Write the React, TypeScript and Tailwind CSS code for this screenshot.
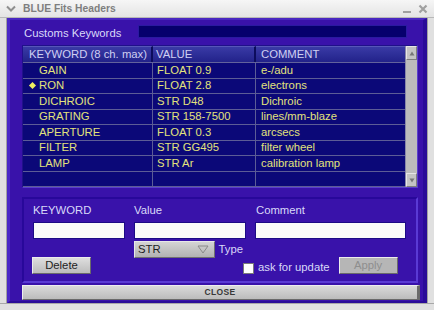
import React from "react";

type Row = { key: string; value: string; comment: string; active?: boolean };

const rows: Row[] = [
  { key: "GAIN", value: "FLOAT 0.9", comment: "e-/adu" },
  { key: "RON", value: "FLOAT 2.8", comment: "electrons", active: true },
  { key: "DICHROIC", value: "STR D48", comment: "Dichroic" },
  { key: "GRATING", value: "STR 158-7500", comment: "lines/mm-blaze" },
  { key: "APERTURE", value: "FLOAT 0.3", comment: "arcsecs" },
  { key: "FILTER", value: "STR GG495", comment: "filter wheel" },
  { key: "LAMP", value: "STR Ar", comment: "calibration lamp" },
  { key: "", value: "", comment: "" },
];

const TitleBar = () => (
  <div className="h-[18px] flex items-center bg-linear-to-b from-[#f6f6f6] to-[#e4e4e4] border-b border-[#b8b8b8]">
    <svg width="10" height="7" viewBox="0 0 10 7" className="ml-[6px]">
      <path d="M1 1.5 L5 5.5 L9 1.5" stroke="#8e8e8e" strokeWidth="2" fill="none" />
    </svg>
    <span className="ml-[7px] text-[10.3px] font-bold text-[#7e7e7e]">BLUE Fits Headers</span>
    <div className="ml-auto mr-[6px] flex items-center gap-[7px]">
      <div className="w-[8px] h-[2px] bg-[#a0a0a0] mt-[7px]" />
      <svg width="10" height="10" viewBox="0 0 10 10">
        <path d="M1.5 1.5 L8.5 8.5 M8.5 1.5 L1.5 8.5" stroke="#a0a0a0" strokeWidth="2.2" />
      </svg>
    </div>
  </div>
);

const ScrollArrow = ({ up }: { up?: boolean }) => (
  <div className="h-[14px] flex items-center justify-center bg-[#c4c4c4] border-t border-l border-t-[#e6e6e6] border-l-[#e6e6e6] border-b border-r border-b-[#7e7e7e] border-r-[#7e7e7e]">
    <svg width="6" height="5" viewBox="0 0 6 5">
      <path d={up ? "M3 0.5 L5.5 4.5 L0.5 4.5 Z" : "M0.5 0.5 L5.5 0.5 L3 4.5 Z"} fill="#777" />
    </svg>
  </div>
);

const KeywordTable = () => (
  <div className="mt-[7px] w-[396px] flex border border-t-[#20108a] border-l-[#20108a] border-b-[#5a40cc] border-r-[#5a40cc] bg-[#0b0878]">
    <div className="flex flex-col">
      <div className="h-[17px] flex text-[#cfcff2] border-b border-[#62629c]">
        <div className="w-[130px] pl-[6px] flex items-center bg-linear-to-b from-[#3a3aa6] to-[#22228a] border-t border-[#5656b8] border-r-2 border-r-[#0c0c5c]">
          KEYWORD (8 ch. max)
        </div>
        <div className="w-[103px] pl-[3px] flex items-center bg-linear-to-b from-[#3a3aa6] to-[#22228a] border-t border-[#5656b8] border-r-2 border-r-[#0c0c5c]">
          VALUE
        </div>
        <div className="w-[149px] pl-[5px] flex items-center bg-linear-to-b from-[#3a3aa6] to-[#22228a] border-t border-[#5656b8]">
          COMMENT
        </div>
      </div>
      {rows.map((r, i) => (
        <div key={i} className="h-[15.5px] flex text-[#e2e27c] border-b border-[#5c5c96]">
          <div className="w-[130px] flex items-center border-r border-[#5c5c96]">
            <div className="w-[16px] flex justify-center">
              {r.active && <div className="w-[5px] h-[5px] rotate-45 bg-[#f0f060] ml-[2px]" />}
            </div>
            {r.key}
          </div>
          <div className="w-[103px] pl-[4px] flex items-center border-r border-[#5c5c96]">{r.value}</div>
          <div className="w-[149px] pl-[5px] flex items-center">{r.comment}</div>
        </div>
      ))}
    </div>
    <div className="w-[12px] flex flex-col justify-between bg-[#bcbcbc] border-l border-[#8888a8]">
      <ScrollArrow up />
      <ScrollArrow />
    </div>
  </div>
);

const GrayButton = ({ label, disabled, w }: { label: string; disabled?: boolean; w: string }) => (
  <div
    className={`${w} h-[17px] flex items-center justify-center border border-t-[#ececec] border-l-[#ececec] border-b-[#6a6a6a] border-r-[#6a6a6a] ${
      disabled ? "bg-[#b6b6b6] text-[#8e8e8e]" : "bg-linear-to-b from-[#dedede] to-[#bcbcbc] text-[#1e1e1e]"
    }`}
  >
    {label}
  </div>
);

const TextInput = ({ w }: { w: string }) => (
  <div className={`${w} h-[17px] bg-[#fafafa] border border-[#1c0a86]`} />
);

const EditPanel = () => (
  <div className="mt-[9px] w-[396px] h-[86px] border-2 border-t-[#28089a] border-l-[#28089a] border-b-[#5a3ad4] border-r-[#5a3ad4] pl-[8px] pt-[5px] text-[#d8d8f8]">
    <div className="flex">
      <div className="w-[102px] flex flex-col">
        <span className="pl-[1px] h-[13px] leading-[13px]">KEYWORD</span>
        <div className="mt-[5px] ml-[1px]"><TextInput w="w-[92px]" /></div>
      </div>
      <div className="w-[121px] flex flex-col">
        <span className="h-[13px] leading-[13px]">Value</span>
        <div className="mt-[5px]"><TextInput w="w-[112px]" /></div>
      </div>
      <div className="flex flex-col">
        <span className="pl-[1px] h-[13px] leading-[13px]">Comment</span>
        <div className="mt-[5px]"><TextInput w="w-[151px]" /></div>
      </div>
    </div>
    <div className="flex">
      <div className="w-[102px] pt-[18px]">
        <GrayButton label="Delete" w="w-[59px]" />
      </div>
      <div className="w-[109px] pt-[2px] flex items-start">
        <div className="w-[82px] h-[17px] flex items-center justify-between pl-[3px] pr-[5px] bg-linear-to-b from-[#d4d4d4] to-[#b2b2b2] border border-t-[#e8e8e8] border-l-[#e8e8e8] border-b-[#707070] border-r-[#707070] text-[#1e1e1e]">
          STR
          <svg width="12" height="9" viewBox="0 0 12 9">
            <path d="M1 1 L11 1 L6 8 Z" fill="none" stroke="#8a8a8a" strokeWidth="1" />
          </svg>
        </div>
        <span className="ml-[4px] h-[17px] leading-[17px]">Type</span>
      </div>
      <div className="pt-[18px] flex items-end">
        <div className="w-[11px] h-[11px] bg-white border border-[#7a7a7a]" />
        <span className="ml-[4px] h-[13px] leading-[13px]">ask for update</span>
        <div className="ml-[9px]">
          <GrayButton label="Apply" disabled w="w-[59px]" />
        </div>
      </div>
    </div>
  </div>
);

export default function App() {
  return (
    <div className="w-[434px] h-[310px] flex flex-col bg-[#e2e2e2] font-['Liberation_Sans',Arial,sans-serif] text-[11.3px] overflow-hidden">
      <TitleBar />
      <div className="flex h-[285px]">
        <div className="w-[7px] bg-[#e0e0e0] border-r border-[#a2a2a2]" />
        <div className="w-[420px] flex flex-col pl-[12px] bg-[#3912aa] border-t-2 border-t-[#4826c0] border-l-[3px] border-l-[#4a28c6] border-r-[4px] border-r-[#2a0c98] border-b-2 border-b-[#2a0c98]">
          <div className="mt-[5px] h-[13px] flex items-center">
            <span className="w-[116px] pl-[2px] mt-[4px] text-[#d8d8f8]">Customs Keywords</span>
            <div className="w-[269px] h-[13px] bg-[#06006c] border border-[#2a1aa0]" />
          </div>
          <KeywordTable />
          <EditPanel />
          <div className="mt-[2px] w-[398px] h-[15px] flex items-center justify-center bg-linear-to-b from-[#dadada] to-[#bcbcbc] border border-t-[#eeeeee] border-l-[#eeeeee] border-b-[#6a6a6a] border-r-[3px] border-r-[#6a6a6a] text-[8.5px] font-bold text-[#383838] tracking-[0.3px]">
            CLOSE
          </div>
        </div>
        <div className="w-[7px] bg-[#e0e0e0] border-l border-[#a2a2a2]" />
      </div>
      <div className="h-[7px] bg-[#e0e0e0] border-t border-[#a8a8a8]" />
    </div>
  );
}
